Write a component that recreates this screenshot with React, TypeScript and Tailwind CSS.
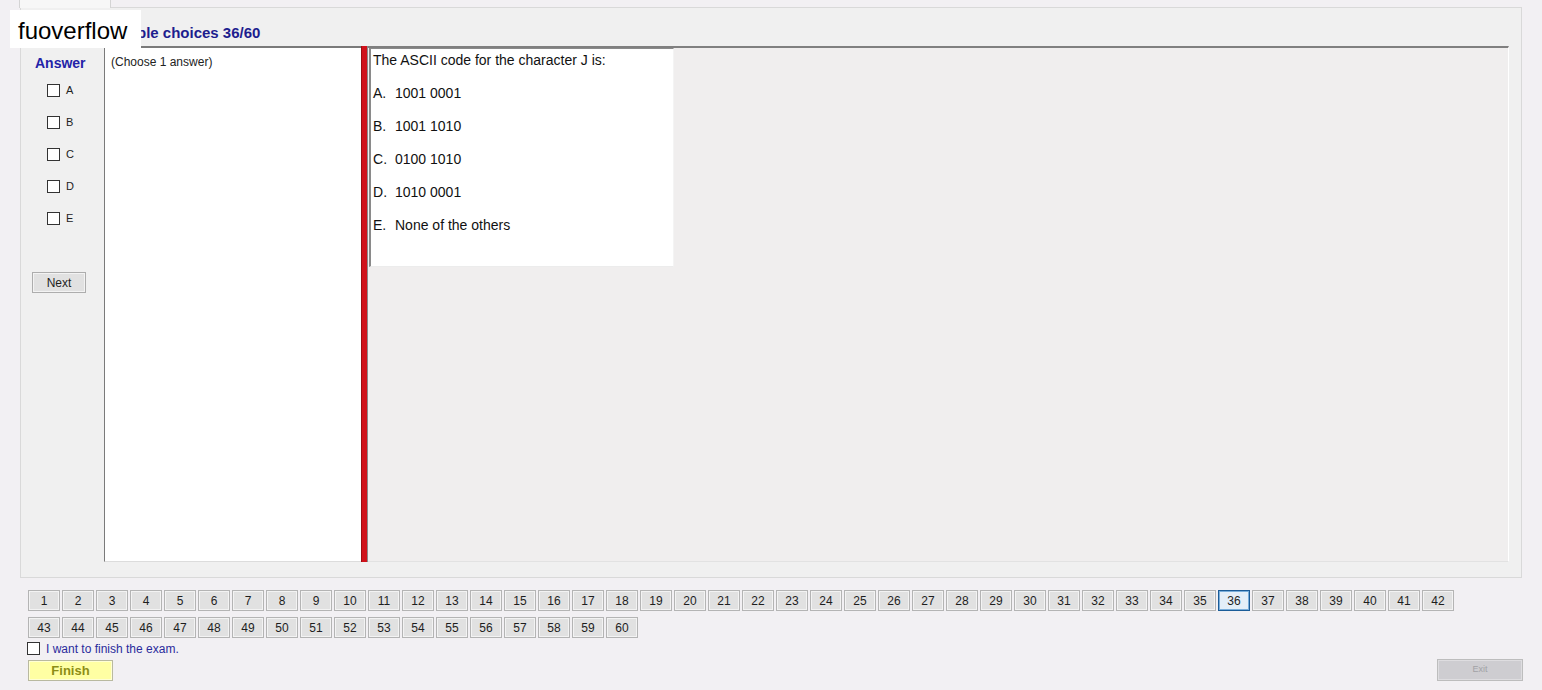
const options = [
  { key: "A", text: "1001 0001" },
  { key: "B", text: "1001 1010" },
  { key: "C", text: "0100 1010" },
  { key: "D", text: "1010 0001" },
  { key: "E", text: "None of the others" },
];

const row1 = Array.from({ length: 42 }, (_, i) => i + 1);
const row2 = Array.from({ length: 18 }, (_, i) => i + 43);
const CURRENT = 36;

function NumButton({ n }: { n: number }) {
  const active = n === CURRENT;
  return (
    <button
      className={`w-[32px] h-[21px] shrink-0 flex items-center justify-center text-[12px] leading-none text-[#1e1e1e] ${
        active
          ? "bg-[#e3eef8] border border-[#1b5c98] shadow-[inset_0_0_0_1px_#79aedb]"
          : "bg-[#e1e1e1] border border-[#b4b4b4] shadow-[inset_0_0_0_1px_#f3f3f3]"
      }`}
    >
      {n}
    </button>
  );
}

function Box() {
  return <span className="w-[13px] h-[13px] shrink-0 bg-white border border-[#333]" />;
}

export default function App() {
  return (
    <div
      className="relative w-[1542px] h-[690px] overflow-hidden bg-[#f2f0f3]"
      style={{ fontFamily: '"Liberation Sans", Arial, sans-serif' }}
    >
      {/* tab strip */}
      <div className="h-[7px] flex">
        <div className="ml-[19px] w-[92px] h-[8px] bg-[#f7f7f7] border-x border-[#d4d4d4]" />
      </div>

      {/* main tab page */}
      <div className="ml-[20px] w-[1502px] h-[571px] border border-[#d9d9d9] bg-[#f0f0f0] flex flex-col">
        <div className="h-[38px] pl-[81px] pt-[13px]">
          <span className="text-[15px] leading-[17px] font-bold text-[#1d1d8e]">
            Multiple choices 36/60
          </span>
        </div>

        <div className="flex h-[516px]">
          {/* answer column */}
          <div className="w-[83px] shrink-0 flex flex-col">
            <div className="pl-[14px] pt-[9px] text-[14px] leading-[16px] font-bold text-[#2323a8]">
              Answer
            </div>
            <div className="flex flex-col mt-[3px]">
              {options.map((o) => (
                <div key={o.key} className="h-[32px] flex items-center gap-[6px] pl-[26px]">
                  <Box />
                  <span className="text-[11px] text-[#222]">{o.key}</span>
                </div>
              ))}
            </div>
            <button className="mt-[38px] ml-[11px] w-[54px] h-[21px] bg-[#e1e1e1] border border-[#adadad] shadow-[inset_0_0_0_1px_#f3f3f3] text-[12px] text-[#1e1e1e] flex items-center justify-center">
              Next
            </button>
          </div>

          {/* choose box */}
          <div className="w-[257px] shrink-0 bg-white border-l border-t-2 border-[#7a7a7a] border-b border-b-[#dcdcdc] pl-[6px] pt-[1px]">
            <span className="text-[12px] leading-[16px] text-[#222]">(Choose 1 answer)</span>
          </div>

          {/* splitter */}
          <div className="w-[7px] shrink-0 bg-[#d0121b] border-l border-[#9c0d12] border-r border-r-[#8a8a8a]" />

          {/* question panel */}
          <div className="w-[1141px] shrink-0 bg-[#f0eeee] border-t-2 border-[#808080] border-r border-r-[#ffffff] border-b border-b-[#e2e2e2]">
            <div className="ml-[1px] w-[305px] h-[219px] bg-white border-l-2 border-t border-[#8a8a8a] border-r border-r-[#f4f4f4] border-b border-b-[#ececec] pl-[2px] pt-[3px] text-[14px] text-[#111]">
              <div className="h-[17px] leading-[17px]">The ASCII code for the character J is:</div>
              {options.map((o) => (
                <div key={o.key} className="mt-[16px] h-[17px] leading-[17px] flex">
                  <span className="w-[22px]">{o.key}.</span>
                  <span>{o.text}</span>
                </div>
              ))}
            </div>
          </div>
        </div>
      </div>

      {/* question navigation */}
      <div className="pl-[28px] mt-[12px] flex flex-col gap-[6px]">
        <div className="flex gap-[2px]">
          {row1.map((n) => (
            <NumButton key={n} n={n} />
          ))}
        </div>
        <div className="flex gap-[2px]">
          {row2.map((n) => (
            <NumButton key={n} n={n} />
          ))}
        </div>
      </div>

      <div className="mt-[3px] pl-[27px] flex items-center gap-[6px] h-[14px]">
        <Box />
        <span className="text-[12px] leading-[14px] text-[#2b2b9c] translate-y-[1px]">I want to finish the exam.</span>
      </div>

      <div className="mt-[4px] pl-[28px] pr-[19px] flex items-start justify-between">
        <button className="mt-[1px] w-[85px] h-[21px] bg-[#ffffa3] border border-[#b9b9a0] shadow-[inset_0_0_0_1px_#ffffd4] text-[13px] font-bold text-[#8d8d16] flex items-center justify-center">
          Finish
        </button>
        <button className="w-[86px] h-[22px] bg-[#cecdd1] border border-[#bdbdbd] shadow-[inset_0_0_0_1px_#dedde0] text-[9px] text-[#a2a2a6] flex items-center justify-center">
          Exit
        </button>
      </div>

      {/* watermark */}
      <div className="absolute left-[10px] top-[10px] w-[131px] h-[38px] bg-white flex items-center pl-[8px] pt-[3px]">
        <span className="text-[24px] leading-none text-black">fuoverflow</span>
      </div>
    </div>
  );
}
